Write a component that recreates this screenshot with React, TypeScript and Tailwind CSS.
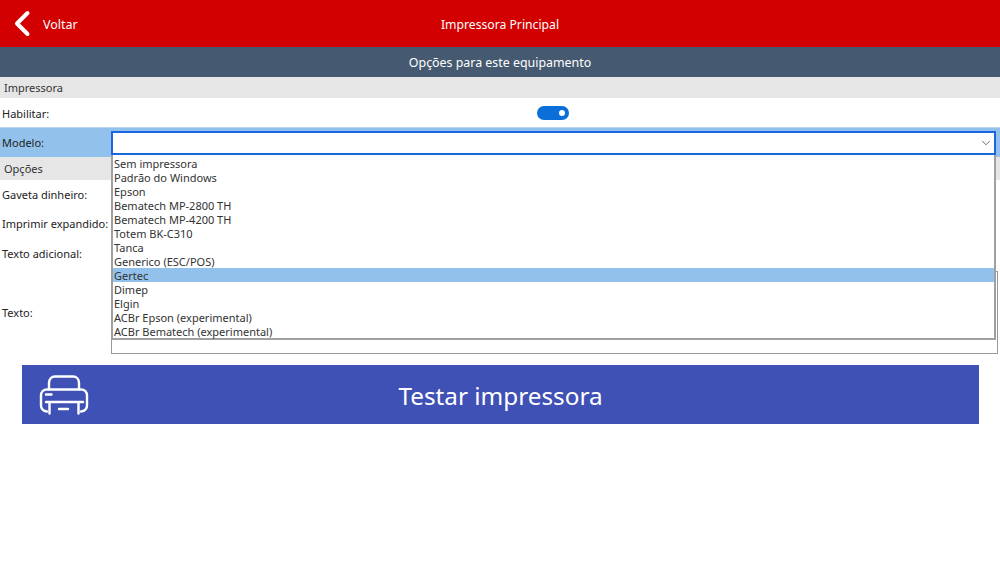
import { ChevronDown } from 'lucide-react';

const models = [
  'Sem impressora',
  'Padrão do Windows',
  'Epson',
  'Bematech MP-2800 TH',
  'Bematech MP-4200 TH',
  'Totem BK-C310',
  'Tanca',
  'Generico (ESC/POS)',
  'Gertec',
  'Dimep',
  'Elgin',
  'ACBr Epson (experimental)',
  'ACBr Bematech (experimental)',
];

function Section({ label, className }: { label: string; className: string }) {
  return (
    <div className={`flex items-center bg-[#e6e6e6] pl-[4px] pt-[2px] text-[#333333] ${className}`}>
      {label}
    </div>
  );
}

function Row({ label, className }: { label: string; className: string }) {
  return <div className={`flex items-center pl-[2px] text-[#222222] ${className}`}>{label}</div>;
}

export default function App() {
  return (
    <div className="relative h-[562px] w-[1000px] overflow-hidden bg-white font-['Noto_Sans',sans-serif] text-[11px]">
      {/* Header */}
      <header className="relative flex h-[47px] items-center justify-center bg-[#d20000] pt-[3px] text-white">
        <div className="absolute left-[12px] top-[10px] flex items-center">
          <svg width="20" height="27" viewBox="0 0 20 27" fill="none">
            <path d="M15.5 3L5 13.5L15.500 24" stroke="white" strokeWidth="4" strokeLinecap="round" strokeLinejoin="round" />
          </svg>
          <span className="ml-[11px] pt-[4px] text-[12.5px]">Voltar</span>
        </div>
        <span className="text-[12.2px]">Impressora Principal</span>
      </header>

      <div className="flex h-[30px] items-center justify-center bg-[#455a70] pt-[3px] text-[12.4px] text-white">
        Opções para este equipamento
      </div>

      <Section label="Impressora" className="h-[21px]" />

      <div className="relative">
        <Row label="Habilitar:" className="h-[29px] pt-[3px]" />
        <div className="absolute left-[537px] top-[8px] flex h-[14px] w-[32px] items-center justify-end rounded-full bg-[#0a6fd8] pr-[4px]">
          <div className="h-[6px] w-[6px] rounded-full bg-white" />
        </div>
      </div>

      <div className="flex h-[30px] items-center border-t border-[#b9d5f0] bg-[#92c2ec] pl-[2px] pr-[4px] text-[#222222]">
        <span className="w-[109px] pt-[2px]">Modelo:</span>
        <div className="flex h-[24px] flex-1 items-center justify-end border-2 border-[#1a66e0] bg-white pr-[1px]">
          <ChevronDown size={14} strokeWidth={1.5} className="text-[#555555]" />
        </div>
      </div>

      <Section label="Opções" className="h-[23px]" />

      <Row label="Gaveta dinheiro:" className="h-[29px] pt-[2px]" />
      <Row label="Imprimir expandido:" className="h-[30px]" />
      <Row label="Texto adicional:" className="h-[29px] pt-[2px]" />
      <Row label="Texto:" className="h-[90px]" />

      {/* Text box behind the open list */}
      <div className="absolute left-[111px] top-[271px] h-[83px] w-[887px] border border-[#999999] bg-white" />

      {/* Open list of models */}
      <ul className="absolute left-[111px] top-[155px] h-[185px] w-[885px] border-2 border-t-0 border-[#a0a0a0] bg-white pt-[1px] text-[#333333]">
        {models.map((model) => (
          <li
            key={model}
            className={`flex h-[14px] items-center pl-[1px] pt-[2px] ${model === 'Gertec' ? 'bg-[#92c2ec]' : ''}`}
          >
            {model}
          </li>
        ))}
      </ul>

      {/* Test button */}
      <div className="absolute left-[22px] top-[365px] flex h-[59px] w-[957px] items-center justify-center bg-[#3f51b5] pt-[3px] text-[24.3px] text-white">
        <svg className="absolute left-[17px] top-[9px]" width="50" height="42" viewBox="0 0 50 42" fill="none" stroke="white" strokeWidth="2.4" strokeLinecap="round" strokeLinejoin="round">
          <path d="M10 15V9C10 5 12.500 2.500 16 2.500H34C37.500 2.500 40 5 40 9V15" />
          <path d="M8 37.500C4 37 2 34.500 2 31.500V21.500C2 18 4.500 15.500 8 15.500H42C45.500 15.500 48 18 48 21.500V31.500C48 34.500 46 37 42 37.500" />
          <path d="M7 28H44M10.500 28V39.500M39.500 28V39.500" />
          <path d="M7 20.500H12.500M20 35H29" />
        </svg>
        Testar impressora
      </div>
    </div>
  );
}
